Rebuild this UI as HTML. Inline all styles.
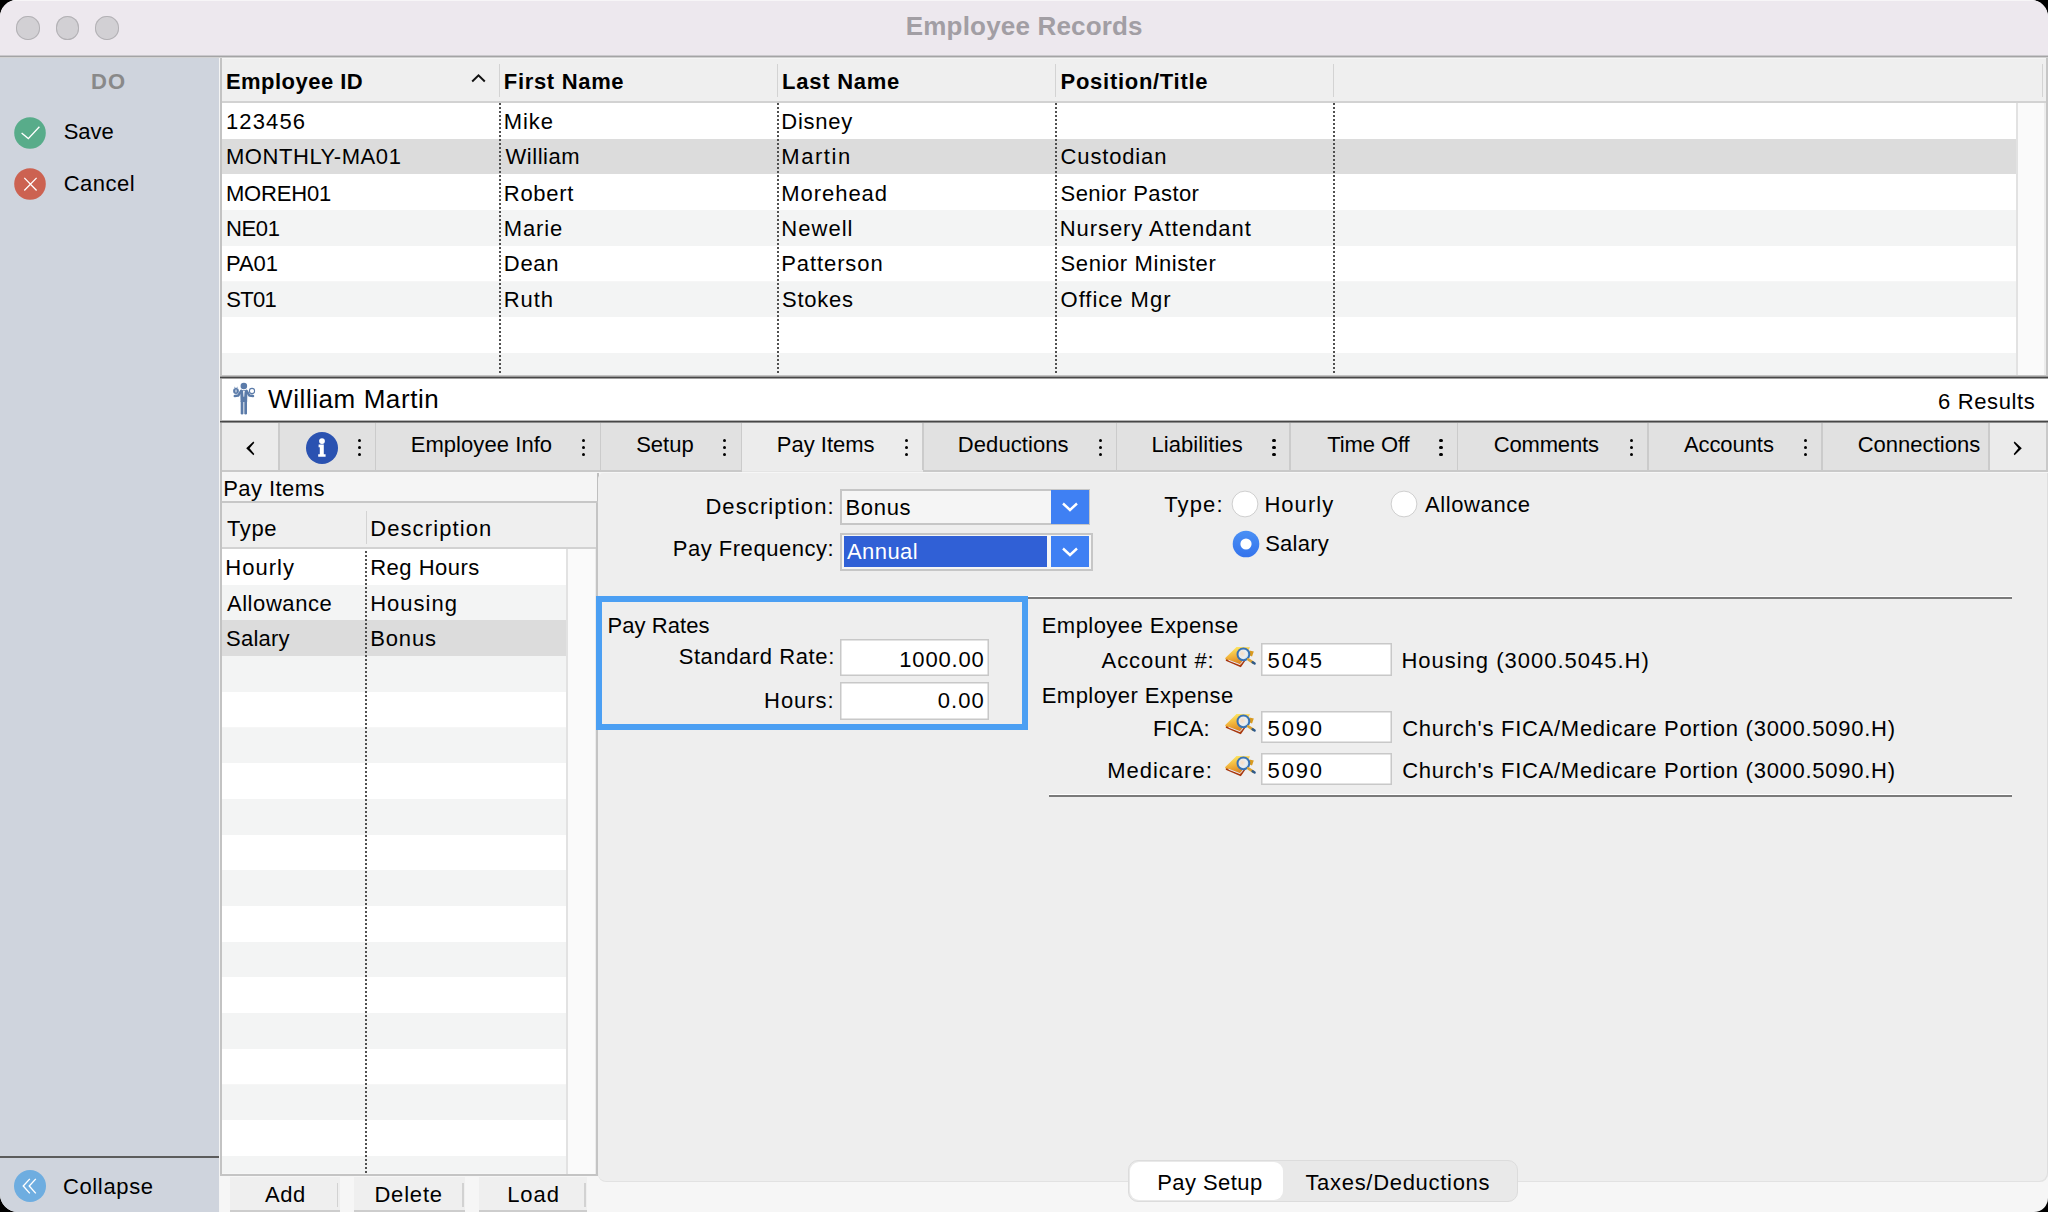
<!DOCTYPE html>
<html><head><meta charset="utf-8"><title>Employee Records</title>
<style>
html,body{margin:0;padding:0;background:#000;width:2048px;height:1212px;overflow:hidden}
#win{position:absolute;left:0;top:0;width:2048px;height:1212px;border-radius:17px 17px 14px 18px;overflow:hidden;background:#f6f6f6}
.b{position:absolute}
.t{position:absolute;white-space:nowrap;line-height:1;font-family:"Liberation Sans",sans-serif;color:#000}
.dot{position:absolute;width:2px;background-image:linear-gradient(to bottom,#505050 0,#505050 2px,transparent 2px,transparent 4px);background-size:2px 4px}
</style></head><body><div id="win">
<div class="b" style="left:0px;top:0px;width:2048px;height:55px;background:#ede8ee;"></div>
<div class="b" style="left:0px;top:0px;width:2048px;height:1px;background:#f7f5f7;"></div>
<div class="b" style="left:0px;top:55px;width:2048px;height:1px;background:#cac8cc;"></div>
<div class="b" style="left:0px;top:56px;width:2048px;height:1px;background:#a4a4a5;"></div>
<div class="b" style="left:0px;top:57px;width:2048px;height:1px;background:#d2d2d2;"></div>
<div class="b" style="left:16.15px;top:16.1px;width:23.5px;height:23.5px;border-radius:50%;background:#d2d0d4;box-shadow:inset 0 0 0 1px #b3b1b5"></div>
<div class="b" style="left:55.75px;top:16.1px;width:23.5px;height:23.5px;border-radius:50%;background:#d2d0d4;box-shadow:inset 0 0 0 1px #b3b1b5"></div>
<div class="b" style="left:95.35px;top:16.1px;width:23.5px;height:23.5px;border-radius:50%;background:#d2d0d4;box-shadow:inset 0 0 0 1px #b3b1b5"></div>
<div class="t" id="t0" style="top:13.43px;left:905.82px;font-size:26px;letter-spacing:0.175px;font-weight:700;color:#a29ea4;">Employee Records</div>
<div class="b" style="left:0px;top:58px;width:219px;height:1154px;background:#cfd4dd;"></div>
<div class="b" style="left:219px;top:58px;width:1px;height:1154px;background:#f4f4f4;"></div>
<div class="b" style="left:220px;top:58px;width:2px;height:1117.5px;background:#c3c3c3;"></div>
<div class="t" id="t1" style="top:70.93px;left:90.90px;font-size:22px;letter-spacing:1.100px;font-weight:700;color:#898989;">DO</div>
<svg class="b" style="left:13.5px;top:116.5px" width="32" height="32" viewBox="0 0 32 32"><circle cx="16" cy="16" r="15.8" fill="#58ac8a"/><path d="M7.6 16.1 L14.3 21.6 L25.4 9.7" fill="none" stroke="#fff" stroke-width="1.35"/></svg>
<div class="t" id="t2" style="top:120.93px;left:63.70px;font-size:22px;letter-spacing:-0.033px;">Save</div>
<svg class="b" style="left:13.5px;top:168.25px" width="32" height="32" viewBox="0 0 32 32"><circle cx="16" cy="16" r="15.8" fill="#cc6251"/><path d="M10.3 9.9 L22.6 22.5 M22.6 9.9 L10.3 22.5" fill="none" stroke="#fff" stroke-width="1.3"/></svg>
<div class="t" id="t3" style="top:172.68px;left:63.70px;font-size:22px;letter-spacing:0.500px;">Cancel</div>
<div class="b" style="left:0px;top:1156px;width:219px;height:2px;background:#5c5c5c;"></div>
<svg class="b" style="left:14px;top:1170px" width="32" height="32" viewBox="0 0 32 32"><circle cx="16" cy="16" r="16" fill="#6eade0"/><path d="M15.8 8.9 L9.25 16 L15.8 23.4 M21.8 8.9 L15.25 16 L21.8 23.4" fill="none" stroke="#fff" stroke-width="1.4"/></svg>
<div class="t" id="t4" style="top:1176.16px;left:62.96px;font-size:22px;letter-spacing:0.637px;">Collapse</div>
<div class="b" style="left:222px;top:58px;width:1824px;height:43px;background:#efefef;"></div>
<div class="b" style="left:222px;top:58px;width:1824px;height:1px;background:#f5f5f5;"></div>
<div class="b" style="left:222px;top:101px;width:1824px;height:2px;background:#d2d2d2;"></div>
<div class="b" style="left:2046px;top:58px;width:2px;height:321px;background:#c6c6c6;"></div>
<div class="b" style="left:498.5px;top:63.5px;width:1.5px;height:33.5px;background:#d3d3d3;"></div>
<div class="b" style="left:776.5px;top:63.5px;width:1.5px;height:33.5px;background:#d3d3d3;"></div>
<div class="b" style="left:1054.5px;top:63.5px;width:1.5px;height:33.5px;background:#d3d3d3;"></div>
<div class="b" style="left:1332.5px;top:63.5px;width:1.5px;height:33.5px;background:#d3d3d3;"></div>
<div class="b" style="left:2041.5px;top:63.5px;width:1.5px;height:33.5px;background:#d3d3d3;"></div>
<div class="t" id="t5" style="top:70.50px;left:225.90px;font-size:22px;letter-spacing:0.470px;font-weight:700;">Employee ID</div>
<div class="t" id="t6" style="top:70.50px;left:503.84px;font-size:22px;letter-spacing:0.674px;font-weight:700;">First Name</div>
<div class="t" id="t7" style="top:70.50px;left:782.08px;font-size:22px;letter-spacing:0.750px;font-weight:700;">Last Name</div>
<div class="t" id="t8" style="top:70.50px;left:1060.58px;font-size:22px;letter-spacing:0.710px;font-weight:700;">Position/Title</div>
<svg class="b" style="left:470px;top:72px" width="17" height="12" viewBox="0 0 17 12"><path d="M2.2 9.5 L8.5 3.3 L14.8 9.5" fill="none" stroke="#111" stroke-width="2"/></svg>
<div class="b" style="left:222px;top:103.0px;width:1794px;height:35.69999999999999px;background:#ffffff;"></div>
<div class="t" id="t9" style="top:110.98px;left:225.90px;font-size:22px;letter-spacing:1.140px;">123456</div>
<div class="t" id="t10" style="top:110.98px;left:503.84px;font-size:22px;letter-spacing:0.873px;">Mike</div>
<div class="t" id="t11" style="top:110.98px;left:781.28px;font-size:22px;letter-spacing:0.724px;">Disney</div>
<div class="b" style="left:222px;top:138.7px;width:1794px;height:35.70000000000002px;background:#dcdcdc;"></div>
<div class="t" id="t12" style="top:146.36px;left:225.90px;font-size:22px;letter-spacing:0.573px;">MONTHLY-MA01</div>
<div class="t" id="t13" style="top:146.36px;left:505.44px;font-size:22px;letter-spacing:0.553px;">William</div>
<div class="t" id="t14" style="top:146.36px;left:781.28px;font-size:22px;letter-spacing:1.556px;">Martin</div>
<div class="t" id="t15" style="top:146.36px;left:1060.58px;font-size:22px;letter-spacing:0.840px;">Custodian</div>
<div class="b" style="left:222px;top:174.4px;width:1794px;height:35.69999999999999px;background:#ffffff;"></div>
<div class="t" id="t16" style="top:182.54px;left:225.90px;font-size:22px;letter-spacing:-0.167px;">MOREH01</div>
<div class="t" id="t17" style="top:182.54px;left:503.84px;font-size:22px;letter-spacing:0.692px;">Robert</div>
<div class="t" id="t18" style="top:182.54px;left:781.28px;font-size:22px;letter-spacing:0.957px;">Morehead</div>
<div class="t" id="t19" style="top:182.54px;left:1060.58px;font-size:22px;letter-spacing:0.420px;">Senior Pastor</div>
<div class="b" style="left:222px;top:210.1px;width:1794px;height:35.70000000000002px;background:#f3f4f4;"></div>
<div class="t" id="t20" style="top:217.92px;left:225.90px;font-size:22px;letter-spacing:-0.300px;">NE01</div>
<div class="t" id="t21" style="top:217.92px;left:503.84px;font-size:22px;letter-spacing:0.820px;">Marie</div>
<div class="t" id="t22" style="top:217.92px;left:781.28px;font-size:22px;letter-spacing:1.044px;">Newell</div>
<div class="t" id="t23" style="top:217.92px;left:1059.78px;font-size:22px;letter-spacing:0.930px;">Nursery Attendant</div>
<div class="b" style="left:222px;top:245.8px;width:1794px;height:35.69999999999999px;background:#ffffff;"></div>
<div class="t" id="t24" style="top:253.30px;left:225.90px;font-size:22px;letter-spacing:-0.033px;">PA01</div>
<div class="t" id="t25" style="top:253.30px;left:503.84px;font-size:22px;letter-spacing:0.660px;">Dean</div>
<div class="t" id="t26" style="top:253.30px;left:781.28px;font-size:22px;letter-spacing:0.900px;">Patterson</div>
<div class="t" id="t27" style="top:253.30px;left:1060.58px;font-size:22px;letter-spacing:0.603px;">Senior Minister</div>
<div class="b" style="left:222px;top:281.5px;width:1794px;height:35.69999999999999px;background:#f3f4f4;"></div>
<div class="t" id="t28" style="top:289.28px;left:226.30px;font-size:22px;letter-spacing:-0.727px;">ST01</div>
<div class="t" id="t29" style="top:289.48px;left:503.84px;font-size:22px;letter-spacing:0.873px;">Ruth</div>
<div class="t" id="t30" style="top:289.48px;left:782.08px;font-size:22px;letter-spacing:0.724px;">Stokes</div>
<div class="t" id="t31" style="top:289.48px;left:1060.58px;font-size:22px;letter-spacing:0.980px;">Office Mgr</div>
<div class="b" style="left:222px;top:317.2px;width:1794px;height:35.69999999999999px;background:#ffffff;"></div>
<div class="b" style="left:222px;top:352.9px;width:1794px;height:24.100000000000023px;background:#f3f4f4;"></div>
<div class="dot" style="left:498.5px;top:103px;height:274px"></div>
<div class="dot" style="left:776.5px;top:103px;height:274px"></div>
<div class="dot" style="left:1054.5px;top:103px;height:274px"></div>
<div class="dot" style="left:1332.5px;top:103px;height:274px"></div>
<div class="b" style="left:2016px;top:103px;width:1.5px;height:274px;background:#e2e2e2;"></div>
<div class="b" style="left:2017.5px;top:103px;width:26.5px;height:274px;background:#fafafa;"></div>
<div class="b" style="left:2044px;top:103px;width:2px;height:274px;background:#ececec;"></div>
<div class="b" style="left:222px;top:375px;width:1824px;height:1px;background:#c4c4c4;"></div>
<div class="b" style="left:220px;top:376px;width:1828px;height:1px;background:#9a9a9a;"></div>
<div class="b" style="left:220px;top:377px;width:1828px;height:1px;background:#474747;"></div>
<div class="b" style="left:220px;top:378px;width:1828px;height:1px;background:#a0a0a0;"></div>
<div class="b" style="left:222px;top:379px;width:1826px;height:42px;background:#ffffff;"></div>
<div class="b" style="left:220px;top:420px;width:1828px;height:1px;background:#b5b5b5;"></div>
<div class="b" style="left:220px;top:421px;width:1828px;height:1px;background:#474747;"></div>
<div class="b" style="left:220px;top:422px;width:1828px;height:1px;background:#8c8c8c;"></div>
<svg class="b" style="left:226px;top:378px" width="36" height="42" viewBox="0 0 36 42"><g fill="#5b7ba9" stroke="none"><circle cx="17.85" cy="8" r="3.3"/><path d="M14.2 12.6 Q17.85 11.4 21.5 12.6 L21.1 23.9 L14.6 23.9 Z"/><rect x="14.7" y="22.5" width="2.7" height="14" rx="1.3"/><rect x="18.3" y="22.5" width="2.7" height="14" rx="1.3"/><circle cx="10" cy="13" r="2.9"/></g><g fill="none" stroke="#5b7ba9" stroke-linecap="round" stroke-linejoin="round"><path d="M15.2 12.9 L12.2 17.6 L8.8 18" stroke-width="2.5"/><path d="M20.5 12.9 L23.5 17.6 L27 18" stroke-width="2.5"/><circle cx="26" cy="13" r="2.6" stroke-width="1.1"/><path d="M8.6 9.4 L10 10.6 L11.4 9.4" stroke-width="0.8"/></g><path d="M17.85 12.3 L17.1 13.3 L17.5 18.7 L18.2 18.7 L18.6 13.3 Z" fill="#fff"/><path d="M10 11.6 V14.4" stroke="#fff" stroke-width="0.9"/></svg>
<div class="t" id="t32" style="top:386.49px;left:268.08px;font-size:26px;letter-spacing:0.572px;">William Martin</div>
<div class="t" id="t33" style="top:391.28px;right:12.64px;font-size:22px;letter-spacing:0.620px;">6 Results</div>
<div class="b" style="left:222px;top:423px;width:1824px;height:47px;background:#e1e1e1;"></div>
<div class="b" style="left:222px;top:423px;width:56.5px;height:47px;background:#ebebeb;"></div>
<div class="b" style="left:1989px;top:423px;width:57px;height:47px;background:#ebebeb;"></div>
<div class="b" style="left:742px;top:423px;width:180.60000000000002px;height:49px;background:#ececec;"></div>
<div class="b" style="left:222px;top:470px;width:520px;height:2px;background:#c9c9c9;"></div>
<div class="b" style="left:922.6px;top:470px;width:1125.4px;height:2px;background:#c9c9c9;"></div>
<div class="b" style="left:742px;top:471px;width:180.60000000000002px;height:1px;background:#e4e4e4;"></div>
<div class="b" style="left:2046px;top:423px;width:2px;height:47px;background:#c9c9c9;"></div>
<div class="b" style="left:278.3px;top:423px;width:1.599999999999966px;height:47px;background:#cbcbcb;"></div>
<div class="b" style="left:374.6px;top:423px;width:1.599999999999966px;height:47px;background:#cbcbcb;"></div>
<div class="b" style="left:599.6px;top:423px;width:1.6000000000000227px;height:47px;background:#cbcbcb;"></div>
<div class="b" style="left:740.6px;top:423px;width:1.6000000000000227px;height:47px;background:#cbcbcb;"></div>
<div class="b" style="left:922px;top:423px;width:1.6000000000000227px;height:47px;background:#cbcbcb;"></div>
<div class="b" style="left:1115.8px;top:423px;width:1.6000000000001364px;height:47px;background:#cbcbcb;"></div>
<div class="b" style="left:1289.2px;top:423px;width:1.599999999999909px;height:47px;background:#cbcbcb;"></div>
<div class="b" style="left:1456.5px;top:423px;width:1.599999999999909px;height:47px;background:#cbcbcb;"></div>
<div class="b" style="left:1647px;top:423px;width:1.599999999999909px;height:47px;background:#cbcbcb;"></div>
<div class="b" style="left:1821.4px;top:423px;width:1.599999999999909px;height:47px;background:#cbcbcb;"></div>
<div class="b" style="left:1988.2px;top:423px;width:1.599999999999909px;height:47px;background:#cbcbcb;"></div>
<div class="t" id="t34" style="top:434.12px;left:410.66px;font-size:22px;letter-spacing:0.067px;">Employee Info</div>
<div class="t" id="t35" style="top:434.12px;left:636.20px;font-size:22px;letter-spacing:0.000px;">Setup</div>
<div class="t" id="t36" style="top:434.12px;left:776.78px;font-size:22px;letter-spacing:-0.000px;">Pay Items</div>
<div class="t" id="t37" style="top:434.12px;left:957.84px;font-size:22px;letter-spacing:0.071px;">Deductions</div>
<div class="t" id="t38" style="top:434.12px;left:1151.40px;font-size:22px;letter-spacing:0.080px;">Liabilities</div>
<div class="t" id="t39" style="top:434.12px;left:1327.20px;font-size:22px;letter-spacing:-0.091px;">Time Off</div>
<div class="t" id="t40" style="top:434.12px;left:1493.70px;font-size:22px;letter-spacing:-0.160px;">Comments</div>
<div class="t" id="t41" style="top:434.12px;left:1683.88px;font-size:22px;letter-spacing:-0.069px;">Accounts</div>
<div class="t" id="t42" style="top:434.12px;left:1857.64px;font-size:22px;letter-spacing:0.032px;">Connections</div>
<div class="b" style="left:357.95px;top:438.55px;width:3.3px;height:3.3px;border-radius:50%;background:#000"></div>
<div class="b" style="left:357.95px;top:445.85px;width:3.3px;height:3.3px;border-radius:50%;background:#000"></div>
<div class="b" style="left:357.95px;top:453.05px;width:3.3px;height:3.3px;border-radius:50%;background:#000"></div>
<div class="b" style="left:581.85px;top:438.55px;width:3.3px;height:3.3px;border-radius:50%;background:#000"></div>
<div class="b" style="left:581.85px;top:445.85px;width:3.3px;height:3.3px;border-radius:50%;background:#000"></div>
<div class="b" style="left:581.85px;top:453.05px;width:3.3px;height:3.3px;border-radius:50%;background:#000"></div>
<div class="b" style="left:722.95px;top:438.55px;width:3.3px;height:3.3px;border-radius:50%;background:#000"></div>
<div class="b" style="left:722.95px;top:445.85px;width:3.3px;height:3.3px;border-radius:50%;background:#000"></div>
<div class="b" style="left:722.95px;top:453.05px;width:3.3px;height:3.3px;border-radius:50%;background:#000"></div>
<div class="b" style="left:904.55px;top:438.55px;width:3.3px;height:3.3px;border-radius:50%;background:#000"></div>
<div class="b" style="left:904.55px;top:445.85px;width:3.3px;height:3.3px;border-radius:50%;background:#000"></div>
<div class="b" style="left:904.55px;top:453.05px;width:3.3px;height:3.3px;border-radius:50%;background:#000"></div>
<div class="b" style="left:1098.55px;top:438.55px;width:3.3px;height:3.3px;border-radius:50%;background:#000"></div>
<div class="b" style="left:1098.55px;top:445.85px;width:3.3px;height:3.3px;border-radius:50%;background:#000"></div>
<div class="b" style="left:1098.55px;top:453.05px;width:3.3px;height:3.3px;border-radius:50%;background:#000"></div>
<div class="b" style="left:1272.35px;top:438.55px;width:3.3px;height:3.3px;border-radius:50%;background:#000"></div>
<div class="b" style="left:1272.35px;top:445.85px;width:3.3px;height:3.3px;border-radius:50%;background:#000"></div>
<div class="b" style="left:1272.35px;top:453.05px;width:3.3px;height:3.3px;border-radius:50%;background:#000"></div>
<div class="b" style="left:1439.35px;top:438.55px;width:3.3px;height:3.3px;border-radius:50%;background:#000"></div>
<div class="b" style="left:1439.35px;top:445.85px;width:3.3px;height:3.3px;border-radius:50%;background:#000"></div>
<div class="b" style="left:1439.35px;top:453.05px;width:3.3px;height:3.3px;border-radius:50%;background:#000"></div>
<div class="b" style="left:1629.75px;top:438.55px;width:3.3px;height:3.3px;border-radius:50%;background:#000"></div>
<div class="b" style="left:1629.75px;top:445.85px;width:3.3px;height:3.3px;border-radius:50%;background:#000"></div>
<div class="b" style="left:1629.75px;top:453.05px;width:3.3px;height:3.3px;border-radius:50%;background:#000"></div>
<div class="b" style="left:1804.05px;top:438.55px;width:3.3px;height:3.3px;border-radius:50%;background:#000"></div>
<div class="b" style="left:1804.05px;top:445.85px;width:3.3px;height:3.3px;border-radius:50%;background:#000"></div>
<div class="b" style="left:1804.05px;top:453.05px;width:3.3px;height:3.3px;border-radius:50%;background:#000"></div>
<svg class="b" style="left:243px;top:439px" width="14" height="18" viewBox="0 0 14 18"><path d="M10.4 2.4 L3.2 9.3 L10.4 16.2 L11.3 14.9 L6.6 9.3 L11.3 3.7 Z" fill="#000"/></svg>
<svg class="b" style="left:2011.3px;top:439px" width="14" height="18" viewBox="0 0 14 18"><path d="M3.6 2.4 L10.8 9.3 L3.6 16.2 L2.7 14.9 L7.4 9.3 L2.7 3.7 Z" fill="#000"/></svg>
<svg class="b" style="left:306px;top:432px" width="32" height="32" viewBox="0 0 32 32"><circle cx="16" cy="16" r="16" fill="#2a52b1"/><circle cx="16" cy="9.1" r="2.9" fill="#fff"/><path d="M12.6 12.6 h5.2 v9.6 h1.8 v2.6 h-7.4 v-2.6 h1.6 v-7 h-1.2 z" fill="#fff"/></svg>
<div class="b" style="left:222px;top:473px;width:375px;height:28px;background:#f5f5f5;"></div>
<div class="b" style="left:597px;top:473px;width:1.5px;height:30px;background:#bfbfbf;"></div>
<div class="b" style="left:222px;top:501px;width:376px;height:2px;background:#c7c7c7;"></div>
<div class="t" id="t43" style="top:477.62px;left:223.22px;font-size:22px;letter-spacing:0.440px;">Pay Items</div>
<div class="b" style="left:222px;top:503px;width:374px;height:44px;background:#efefef;"></div>
<div class="b" style="left:222px;top:547px;width:374px;height:2px;background:#d2d2d2;"></div>
<div class="b" style="left:365.5px;top:510.5px;width:1.5px;height:33.0px;background:#d3d3d3;"></div>
<div class="t" id="t44" style="top:518.18px;left:226.88px;font-size:22px;letter-spacing:0.660px;">Type</div>
<div class="t" id="t45" style="top:518.18px;left:370.16px;font-size:22px;letter-spacing:1.108px;">Description</div>
<div class="b" style="left:222px;top:549.0px;width:344px;height:35.700000000000045px;background:#ffffff;"></div>
<div class="t" id="t46" style="top:557.18px;left:225.28px;font-size:22px;letter-spacing:1.012px;">Hourly</div>
<div class="t" id="t47" style="top:557.18px;left:370.16px;font-size:22px;letter-spacing:0.500px;">Reg Hours</div>
<div class="b" style="left:222px;top:584.7px;width:344px;height:35.69999999999993px;background:#f3f4f4;"></div>
<div class="t" id="t48" style="top:592.56px;left:226.88px;font-size:22px;letter-spacing:0.580px;">Allowance</div>
<div class="t" id="t49" style="top:592.56px;left:370.16px;font-size:22px;letter-spacing:1.007px;">Housing</div>
<div class="b" style="left:222px;top:620.4px;width:344px;height:35.700000000000045px;background:#dcdcdc;"></div>
<div class="t" id="t50" style="top:628.10px;left:226.08px;font-size:22px;letter-spacing:0.212px;">Salary</div>
<div class="t" id="t51" style="top:628.10px;left:370.16px;font-size:22px;letter-spacing:0.860px;">Bonus</div>
<div class="b" style="left:222px;top:656.1px;width:344px;height:35.69999999999993px;background:#f3f4f4;"></div>
<div class="b" style="left:222px;top:691.8px;width:344px;height:35.700000000000045px;background:#ffffff;"></div>
<div class="b" style="left:222px;top:727.5px;width:344px;height:35.700000000000045px;background:#f3f4f4;"></div>
<div class="b" style="left:222px;top:763.2px;width:344px;height:35.69999999999993px;background:#ffffff;"></div>
<div class="b" style="left:222px;top:798.9px;width:344px;height:35.700000000000045px;background:#f3f4f4;"></div>
<div class="b" style="left:222px;top:834.6px;width:344px;height:35.69999999999993px;background:#ffffff;"></div>
<div class="b" style="left:222px;top:870.3px;width:344px;height:35.700000000000045px;background:#f3f4f4;"></div>
<div class="b" style="left:222px;top:906.0px;width:344px;height:35.700000000000045px;background:#ffffff;"></div>
<div class="b" style="left:222px;top:941.7px;width:344px;height:35.69999999999993px;background:#f3f4f4;"></div>
<div class="b" style="left:222px;top:977.4px;width:344px;height:35.700000000000045px;background:#ffffff;"></div>
<div class="b" style="left:222px;top:1013.1px;width:344px;height:35.69999999999993px;background:#f3f4f4;"></div>
<div class="b" style="left:222px;top:1048.8px;width:344px;height:35.700000000000045px;background:#ffffff;"></div>
<div class="b" style="left:222px;top:1084.5px;width:344px;height:35.700000000000045px;background:#f3f4f4;"></div>
<div class="b" style="left:222px;top:1120.2px;width:344px;height:35.700000000000045px;background:#ffffff;"></div>
<div class="b" style="left:222px;top:1155.9px;width:344px;height:17.59999999999991px;background:#f3f4f4;"></div>
<div class="dot" style="left:365.4px;top:551.4px;height:622px"></div>
<div class="b" style="left:566px;top:549px;width:1.5px;height:624.5px;background:#e2e2e2;"></div>
<div class="b" style="left:567.5px;top:549px;width:27.0px;height:624.5px;background:#fafafa;"></div>
<div class="b" style="left:594.5px;top:549px;width:1.5px;height:624.5px;background:#ececec;"></div>
<div class="b" style="left:596px;top:503px;width:2px;height:672.5px;background:#c4c4c4;"></div>
<div class="b" style="left:220px;top:1173.5px;width:378px;height:2.0px;background:#c4c4c4;"></div>
<div class="b" style="left:230px;top:1176.5px;width:109.60000000000002px;height:35.5px;background:#efefef;"></div>
<div class="b" style="left:230px;top:1209.5px;width:109.60000000000002px;height:2.5px;background:#cdcdcd;"></div>
<div class="b" style="left:336.6px;top:1183px;width:1.5px;height:24px;background:#d2d2d2;"></div>
<div class="t" id="t52" style="top:1184.06px;left:265.00px;font-size:22px;letter-spacing:0.500px;">Add</div>
<div class="b" style="left:353.9px;top:1176.5px;width:111.10000000000002px;height:35.5px;background:#efefef;"></div>
<div class="b" style="left:353.9px;top:1209.5px;width:111.10000000000002px;height:2.5px;background:#cdcdcd;"></div>
<div class="b" style="left:462px;top:1183px;width:1.5px;height:24px;background:#d2d2d2;"></div>
<div class="t" id="t53" style="top:1184.06px;left:374.40px;font-size:22px;letter-spacing:0.820px;">Delete</div>
<div class="b" style="left:479.2px;top:1176.5px;width:107.80000000000001px;height:35.5px;background:#efefef;"></div>
<div class="b" style="left:479.2px;top:1209.5px;width:107.80000000000001px;height:2.5px;background:#cdcdcd;"></div>
<div class="b" style="left:584px;top:1183px;width:1.5px;height:24px;background:#d2d2d2;"></div>
<div class="t" id="t54" style="top:1184.06px;left:507.16px;font-size:22px;letter-spacing:0.927px;">Load</div>
<div class="b" style="left:598px;top:473px;width:1450px;height:708.2px;background:#eeeeee;border-radius:6px 0 8px 8px;box-shadow:0 1px 0 #e2e2e2, inset -1px 0 0 #dedede"></div>
<div class="t" id="t55" style="top:495.50px;right:1213.30px;font-size:22px;letter-spacing:1.096px;">Description:</div>
<div class="t" id="t56" style="top:538.12px;right:1213.88px;font-size:22px;letter-spacing:0.525px;">Pay Frequency:</div>
<div class="b" style="left:840.2px;top:488.6px;width:250.29999999999995px;height:36.89999999999998px;background:#f5f5f5;box-shadow:inset 0 0 0 2px #c6c6c6"></div>
<div class="b" style="left:1051px;top:490.2px;width:38px;height:33.80000000000001px;background:#3f80f3;"></div>
<svg class="b" style="left:1060px;top:500.5px" width="20" height="12" viewBox="0 0 20 12"><path d="M3 2.5 L10 9 L17 2.5" fill="none" stroke="#fff" stroke-width="2.4"/></svg>
<div class="t" id="t57" style="top:497.22px;left:845.40px;font-size:22px;letter-spacing:0.700px;">Bonus</div>
<div class="b" style="left:840.2px;top:532.9px;width:252.39999999999986px;height:37.700000000000045px;background:#f5f5f5;box-shadow:inset 0 0 0 2px #c6c6c6"></div>
<div class="b" style="left:843.8px;top:535.6px;width:202.9000000000001px;height:31.399999999999977px;background:#3060d6;"></div>
<div class="b" style="left:1051.3px;top:535.6px;width:37.700000000000045px;height:31.399999999999977px;background:#3f80f3;"></div>
<svg class="b" style="left:1060px;top:545.5px" width="20" height="12" viewBox="0 0 20 12"><path d="M3 2.5 L10 9 L17 2.5" fill="none" stroke="#fff" stroke-width="2.4"/></svg>
<div class="t" id="t58" style="top:540.92px;left:847.00px;font-size:22px;letter-spacing:0.436px;color:#fff;">Annual</div>
<div class="t" id="t59" style="top:494.18px;left:1164.20px;font-size:22px;letter-spacing:1.140px;">Type:</div>
<svg class="b" style="left:1231.4px;top:490.0px" width="28" height="28" viewBox="0 0 28 28"><circle cx="14" cy="14" r="12.9" fill="#fff" stroke="#c9c9c9" stroke-width="0.9"/></svg>
<svg class="b" style="left:1390.3px;top:490.0px" width="28" height="28" viewBox="0 0 28 28"><circle cx="14" cy="14" r="12.9" fill="#fff" stroke="#c9c9c9" stroke-width="0.9"/></svg>
<svg class="b" style="left:1231.5px;top:529.6px" width="28" height="28" viewBox="0 0 28 28"><defs><linearGradient id="rg" x1="0" y1="0" x2="0" y2="1"><stop offset="0" stop-color="#4a90f5"/><stop offset="1" stop-color="#3473ec"/></linearGradient></defs><circle cx="14" cy="14" r="13.3" fill="url(#rg)"/><circle cx="14" cy="14" r="5.6" fill="#fff"/></svg>
<div class="t" id="t60" style="top:494.18px;left:1264.40px;font-size:22px;letter-spacing:1.044px;">Hourly</div>
<div class="t" id="t61" style="top:494.18px;left:1425.00px;font-size:22px;letter-spacing:0.600px;">Allowance</div>
<div class="t" id="t62" style="top:533.18px;left:1265.20px;font-size:22px;letter-spacing:0.244px;">Salary</div>
<div class="b" style="left:1028px;top:596px;width:984px;height:1px;background:#ffffff;"></div>
<div class="b" style="left:1028px;top:597px;width:984px;height:2px;background:#7a7a7a;"></div>
<div class="b" style="left:596.3px;top:596.3px;width:431.7px;height:133.4px;box-sizing:border-box;border:6px solid #4b9ff3"></div>
<div class="t" id="t63" style="top:614.56px;left:607.40px;font-size:22px;letter-spacing:0.080px;">Pay Rates</div>
<div class="t" id="t64" style="top:646.18px;right:1213.17px;font-size:22px;letter-spacing:0.586px;">Standard Rate:</div>
<div class="t" id="t65" style="top:690.18px;right:1213.45px;font-size:22px;letter-spacing:0.948px;">Hours:</div>
<div class="b" style="left:840px;top:639px;width:149px;height:37px;background:#fff;box-shadow:inset 0 0 0 1.5px #c8c8c8"></div>
<div class="b" style="left:840px;top:682px;width:149px;height:38px;background:#fff;box-shadow:inset 0 0 0 1.5px #c8c8c8"></div>
<div class="t" id="t66" style="top:648.74px;right:1063.37px;font-size:22px;letter-spacing:0.827px;">1000.00</div>
<div class="t" id="t67" style="top:689.74px;right:1063.11px;font-size:22px;letter-spacing:1.093px;">0.00</div>
<div class="t" id="t68" style="top:615.00px;left:1041.72px;font-size:22px;letter-spacing:0.457px;">Employee Expense</div>
<div class="t" id="t69" style="top:684.68px;left:1041.72px;font-size:22px;letter-spacing:0.457px;">Employer Expense</div>
<div class="t" id="t70" style="top:650.18px;right:833.37px;font-size:22px;letter-spacing:0.909px;">Account #:</div>
<div class="t" id="t71" style="top:717.56px;right:838.20px;font-size:22px;letter-spacing:0.140px;">FICA:</div>
<div class="t" id="t72" style="top:760.06px;right:835.22px;font-size:22px;letter-spacing:1.000px;">Medicare:</div>
<svg class="b" style="left:1215px;top:640px" width="50" height="40" viewBox="0 0 50 40"><defs><linearGradient id="bk640" x1="0" y1="0" x2="0.3" y2="1"><stop offset="0" stop-color="#fff46a"/><stop offset="0.55" stop-color="#f2b43c"/><stop offset="1" stop-color="#d98222"/></linearGradient><radialGradient id="ln640" cx="0.4" cy="0.45" r="0.6"><stop offset="0" stop-color="#f6dcc4"/><stop offset="0.6" stop-color="#e9eef2"/><stop offset="1" stop-color="#bcd8ee"/></radialGradient></defs>
<path d="M34.5 10.5 L38.8 11.5 L37 16.5 L33.5 15 Z" fill="#d99a1e"/>
<path d="M21.5 7 L35 7.2 L32 13 L26.5 24.5 Q25.5 26 23.5 25 L11 19.8 Q9.5 19 10.5 17.8 Z" fill="url(#bk640)"/>
<path d="M11 20 L25.5 26.3 L30.5 19" fill="none" stroke="#a8370e" stroke-width="1.7" stroke-linejoin="round"/>
<path d="M13.5 20.2 L25 24.6 L28.5 20.5" fill="none" stroke="#e6e2f2" stroke-width="1"/>
<circle cx="28.4" cy="14.3" r="5.9" fill="url(#ln640)" stroke="#3872b4" stroke-width="2"/>
<path d="M33.2 19.3 L38.2 22.6" stroke="#dca232" stroke-width="2.6" stroke-linecap="round"/>
<path d="M37.6 22.2 L39.6 23.6" stroke="#2d5a8c" stroke-width="2.4" stroke-linecap="round"/>
</svg>
<div class="b" style="left:1261.4px;top:643.2px;width:130.79999999999995px;height:32.39999999999998px;background:#fff;box-shadow:inset 0 0 0 1.5px #c8c8c8"></div>
<div class="t" id="t73" style="top:650.18px;left:1267.58px;font-size:22px;letter-spacing:1.840px;">5045</div>
<div class="t" id="t74" style="top:650.18px;left:1401.40px;font-size:22px;letter-spacing:0.996px;">Housing (3000.5045.H)</div>
<svg class="b" style="left:1215px;top:707.3px" width="50" height="40" viewBox="0 0 50 40"><defs><linearGradient id="bk707" x1="0" y1="0" x2="0.3" y2="1"><stop offset="0" stop-color="#fff46a"/><stop offset="0.55" stop-color="#f2b43c"/><stop offset="1" stop-color="#d98222"/></linearGradient><radialGradient id="ln707" cx="0.4" cy="0.45" r="0.6"><stop offset="0" stop-color="#f6dcc4"/><stop offset="0.6" stop-color="#e9eef2"/><stop offset="1" stop-color="#bcd8ee"/></radialGradient></defs>
<path d="M34.5 10.5 L38.8 11.5 L37 16.5 L33.5 15 Z" fill="#d99a1e"/>
<path d="M21.5 7 L35 7.2 L32 13 L26.5 24.5 Q25.5 26 23.5 25 L11 19.8 Q9.5 19 10.5 17.8 Z" fill="url(#bk707)"/>
<path d="M11 20 L25.5 26.3 L30.5 19" fill="none" stroke="#a8370e" stroke-width="1.7" stroke-linejoin="round"/>
<path d="M13.5 20.2 L25 24.6 L28.5 20.5" fill="none" stroke="#e6e2f2" stroke-width="1"/>
<circle cx="28.4" cy="14.3" r="5.9" fill="url(#ln707)" stroke="#3872b4" stroke-width="2"/>
<path d="M33.2 19.3 L38.2 22.6" stroke="#dca232" stroke-width="2.6" stroke-linecap="round"/>
<path d="M37.6 22.2 L39.6 23.6" stroke="#2d5a8c" stroke-width="2.4" stroke-linecap="round"/>
</svg>
<div class="b" style="left:1261.4px;top:710.5px;width:130.79999999999995px;height:32.799999999999955px;background:#fff;box-shadow:inset 0 0 0 1.5px #c8c8c8"></div>
<div class="t" id="t75" style="top:717.56px;left:1267.58px;font-size:22px;letter-spacing:1.840px;">5090</div>
<div class="t" id="t76" style="top:717.56px;left:1402.20px;font-size:22px;letter-spacing:0.728px;">Church&#39;s FICA/Medicare Portion (3000.5090.H)</div>
<svg class="b" style="left:1215px;top:749.3px" width="50" height="40" viewBox="0 0 50 40"><defs><linearGradient id="bk749" x1="0" y1="0" x2="0.3" y2="1"><stop offset="0" stop-color="#fff46a"/><stop offset="0.55" stop-color="#f2b43c"/><stop offset="1" stop-color="#d98222"/></linearGradient><radialGradient id="ln749" cx="0.4" cy="0.45" r="0.6"><stop offset="0" stop-color="#f6dcc4"/><stop offset="0.6" stop-color="#e9eef2"/><stop offset="1" stop-color="#bcd8ee"/></radialGradient></defs>
<path d="M34.5 10.5 L38.8 11.5 L37 16.5 L33.5 15 Z" fill="#d99a1e"/>
<path d="M21.5 7 L35 7.2 L32 13 L26.5 24.5 Q25.5 26 23.5 25 L11 19.8 Q9.5 19 10.5 17.8 Z" fill="url(#bk749)"/>
<path d="M11 20 L25.5 26.3 L30.5 19" fill="none" stroke="#a8370e" stroke-width="1.7" stroke-linejoin="round"/>
<path d="M13.5 20.2 L25 24.6 L28.5 20.5" fill="none" stroke="#e6e2f2" stroke-width="1"/>
<circle cx="28.4" cy="14.3" r="5.9" fill="url(#ln749)" stroke="#3872b4" stroke-width="2"/>
<path d="M33.2 19.3 L38.2 22.6" stroke="#dca232" stroke-width="2.6" stroke-linecap="round"/>
<path d="M37.6 22.2 L39.6 23.6" stroke="#2d5a8c" stroke-width="2.4" stroke-linecap="round"/>
</svg>
<div class="b" style="left:1261.4px;top:752.5px;width:130.79999999999995px;height:32.60000000000002px;background:#fff;box-shadow:inset 0 0 0 1.5px #c8c8c8"></div>
<div class="t" id="t77" style="top:760.06px;left:1267.58px;font-size:22px;letter-spacing:1.840px;">5090</div>
<div class="t" id="t78" style="top:760.06px;left:1402.20px;font-size:22px;letter-spacing:0.728px;">Church&#39;s FICA/Medicare Portion (3000.5090.H)</div>
<div class="b" style="left:1048.8px;top:794px;width:963.2px;height:1px;background:#ffffff;"></div>
<div class="b" style="left:1048.8px;top:795px;width:963.2px;height:2px;background:#7a7a7a;"></div>
<div class="b" style="left:1128px;top:1160.3px;width:389.8px;height:41.3px;box-sizing:border-box;border-radius:10px;background:#e9e9e9;border:1px solid #dcdcdc"></div>
<div class="b" style="left:1129.5px;top:1162px;width:153.5px;height:37.8px;border-radius:9px;background:#fff"></div>
<div class="t" id="t79" style="top:1172.00px;left:1157.28px;font-size:22px;letter-spacing:0.420px;">Pay Setup</div>
<div class="t" id="t80" style="top:1172.00px;left:1305.38px;font-size:22px;letter-spacing:0.698px;">Taxes/Deductions</div>
</div></body></html>
